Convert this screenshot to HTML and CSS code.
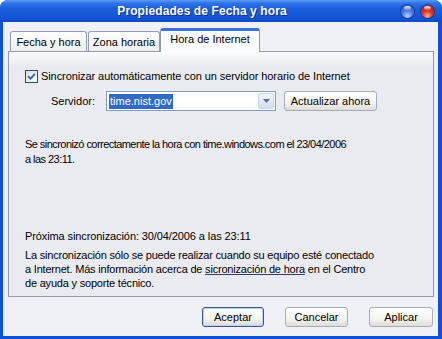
FILE: index.html
```html
<!DOCTYPE html>
<html lang="es">
  <head>
    <meta charset="UTF-8" />
    <title>Propiedades de Fecha y hora</title>
    <link rel="stylesheet" href="styles.css">
  </head>
  <body>
    <div class="window">
      <div class="titlebar">
        <span class="title">Propiedades de Fecha y hora</span>
        <div class="controls">
          <span class="orb blue"></span>
          <span class="orb red"></span>
        </div>
      </div>
      <div class="client">
        <div class="tabs">
          <div class="tab first">Fecha y hora</div>
          <div class="tab second">Zona horaria</div>
          <div class="tab active">Hora de Internet</div>
        </div>
        <div class="panel">
          <label class="check-row">
            <span class="checkbox">
              <svg width="9" height="9" viewBox="0 0 9 9"><path d="M1 4.2 L3.5 6.7 L8 1.8" fill="none" stroke="#3c5fa8" stroke-width="1.8"/></svg>
            </span>
            Sincronizar automáticamente con un servidor horario de Internet
          </label>
          <div class="server-row">
            <span class="server-label">Servidor:</span>
            <div class="combo">
              <span class="combo-value"><span class="selected">time.nist.gov</span></span>
              <span class="combo-arrow">
                <svg width="7" height="4" viewBox="0 0 7 4"><path d="M0 0 H7 L3.5 4 Z" fill="#5a6b8c"/></svg>
              </span>
            </div>
            <button class="btn update" type="button">Actualizar ahora</button>
          </div>
          <p class="status">Se sincronizó correctamente la hora con time.windows.com el 23/04/2006<br>a las 23:11.</p>
          <p class="next">Próxima sincronización: 30/04/2006 a las 23:11</p>
          <p class="note">La sincronización sólo se puede realizar cuando su equipo esté conectado<br>a Internet. Más información acerca de <a href="#">sicronización de hora</a> en el Centro<br>de ayuda y soporte técnico.</p>
        </div>
        <div class="actions">
          <button class="btn default" type="button">Aceptar</button>
          <button class="btn" type="button">Cancelar</button>
          <button class="btn wide" type="button">Aplicar</button>
        </div>
      </div>
    </div>
  </body>
</html>
```

FILE: styles.css
```css
:root {
  --frame-blue: #0c52d8;
  --client-bg: #f0f1f6;
  --panel-bg: #eaebf0;
  --tab-border: #939cae;
  --text-color: #000;
  --font-family: "Liberation Sans", Arial, sans-serif;
}

body {
  margin: 0;
  font-family: var(--font-family);
  font-size: 11px;
  color: var(--text-color);
  background: #fff;
}

.window {
  width: 442px;
  height: 339px;
  display: flex;
  flex-direction: column;
  box-sizing: border-box;
  background: var(--frame-blue);
  border-radius: 8px 8px 0 0;
  overflow: hidden;
}

.titlebar {
  height: 22px;
  flex: none;
  display: flex;
  align-items: center;
  justify-content: center;
  position: relative;
  background: linear-gradient(#5c9cf7 0%, #2f74e8 14%, #1a5edc 40%, #1456d6 75%, #0f4ac6 100%);
}

.title {
  color: #fff;
  font-weight: bold;
  font-size: 12px;
  text-shadow: 1px 1px 0 #0a318f;
  margin-left: -38px;
  letter-spacing: 0.1px;
}

.controls {
  position: absolute;
  right: 8px;
  top: 5px;
  display: flex;
  gap: 7px;
}

.orb {
  width: 13px;
  height: 13px;
  border-radius: 50%;
  position: relative;
  box-shadow: 0 0 0 1px rgba(0, 25, 90, 0.45);
}

.orb::after {
  content: "";
  position: absolute;
  left: 3px;
  top: 1px;
  width: 7px;
  height: 4px;
  border-radius: 50%;
  background: linear-gradient(rgba(255, 255, 255, 0.95), rgba(255, 255, 255, 0.2));
}

.orb.blue {
  background: radial-gradient(circle at 50% 85%, #b8d4ff 0%, #4f82ea 40%, #1c3fa6 100%);
}

.orb.red {
  background: radial-gradient(circle at 50% 85%, #ffb09c 0%, #e8341c 40%, #a3120a 100%);
}

.client {
  flex: 1;
  margin: 0 4px 3px 3px;
  background: var(--client-bg);
  padding: 6px 4px 0 5px;
  display: flex;
  flex-direction: column;
}

.tabs {
  display: flex;
  align-items: flex-end;
  height: 23px;
  margin-left: 2px;
  position: relative;
  z-index: 1;
}

.tab {
  height: 20px;
  box-sizing: border-box;
  padding: 4px 0 0 0;
  text-align: center;
  border: 1px solid var(--tab-border);
  border-bottom: none;
  border-radius: 3px 3px 0 0;
  background: linear-gradient(#fefefe, #eef0f4);
  white-space: nowrap;
}

.tab.first {
  width: 77px;
}

.tab.second {
  width: 72px;
  margin-left: 1px;
}

.tab.active {
  height: 24px;
  width: 100px;
  padding-top: 2px;
  background: #fcfcfe;
  border-color: #8d97ae;
  border-top: 3px solid #3a72e0;
  margin-bottom: -1px;
}

.panel {
  height: 246px;
  box-sizing: border-box;
  border: 1px solid var(--tab-border);
  background: linear-gradient(#fbfbfd, var(--panel-bg) 6%, var(--panel-bg));
  padding: 17px 17px 0 16px;
}

.check-row {
  display: flex;
  align-items: center;
  gap: 3px;
  height: 14px;
  letter-spacing: -0.08px;
}

.checkbox {
  width: 11px;
  height: 11px;
  border: 1px solid #1c5180;
  background: linear-gradient(135deg, #dcdcd7, #fff);
  display: flex;
  align-items: center;
  justify-content: center;
}

.server-row {
  display: flex;
  align-items: center;
  margin-top: 8px;
  padding-left: 26px;
}

.server-label {
  width: 55px;
}

.combo {
  width: 170px;
  height: 20px;
  box-sizing: border-box;
  border: 1px solid #7f9db9;
  background: #fff;
  display: flex;
  align-items: center;
  padding: 1px;
}

.combo-value {
  flex: 1;
  padding-left: 1px;
}

.selected {
  background: #316ac5;
  color: #fff;
  padding: 1px 1px 2px 1px;
}

.combo-arrow {
  width: 16px;
  height: 16px;
  box-sizing: border-box;
  border: 1px solid #c9d6f2;
  border-radius: 2px;
  background: linear-gradient(#f4f6fd, #d2dcf4);
  display: flex;
  align-items: center;
  justify-content: center;
}

.btn {
  font-family: var(--font-family);
  font-size: 11px;
  color: #000;
  height: 20px;
  border: 1px solid #a5acb8;
  border-radius: 3px;
  background: linear-gradient(#ffffff, #f3f3ef 60%, #dedcd6);
  padding: 0;
  white-space: nowrap;
}

.update {
  margin-left: 8px;
  width: 93px;
}

.status {
  margin: 26px 0 0 0;
  line-height: 15px;
  letter-spacing: -0.55px;
}

.next {
  margin: 62px 0 0 0;
  line-height: 15px;
  letter-spacing: -0.1px;
}

.note {
  margin: 4px 0 0 0;
  line-height: 14px;
  letter-spacing: -0.2px;
}

.note a {
  color: #000;
  text-decoration: underline;
  text-decoration-color: #2c3a7a;
}

.actions {
  display: flex;
  justify-content: flex-end;
  gap: 21px;
  padding: 10px 1px 0 0;
}

.actions .btn {
  width: 63px;
}

.actions .btn.wide {
  width: 64px;
}

.btn.default {
  width: 62px;
  border-color: #3c5693;
  box-shadow: inset 0 0 0 1px #bcd0f5;
}
```
